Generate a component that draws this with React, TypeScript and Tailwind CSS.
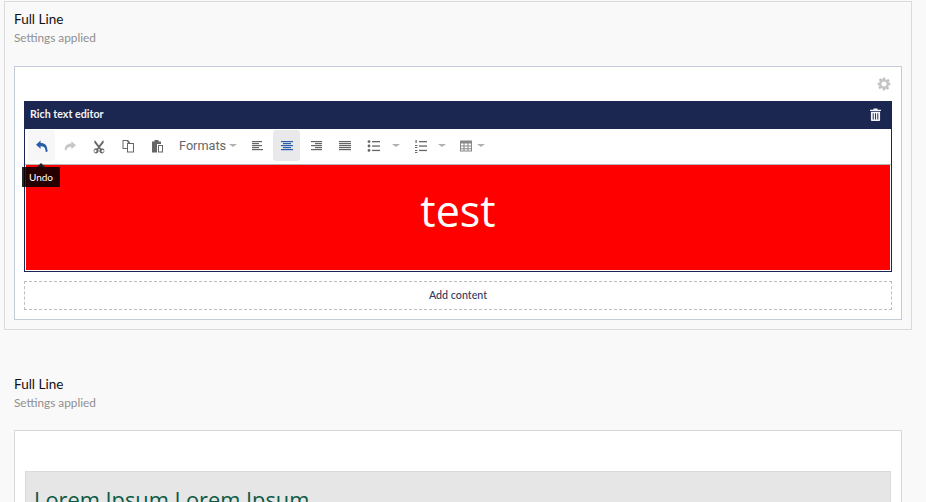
import type { ReactNode } from 'react';

function Svg({ children, className = 'w-4 h-4' }: { children: ReactNode; className?: string }) {
  return (
    <svg viewBox="0 0 16 16" className={className} fill="currentColor" aria-hidden="true">
      {children}
    </svg>
  );
}

const Caret = () => <span className="ml-[3px] w-0 h-0 border-x-[4px] border-x-transparent border-t-[3px] border-t-[#b0b0b0]" />;

function Lines({ rows }: { rows: [number, number][] }) {
  return (
    <Svg>
      {rows.map(([x, w], i) => (
        <rect key={i} x={x} y={3 + i * 2} width={w} height={1.2} />
      ))}
    </Svg>
  );
}

const UndoIcon = () => (
  <Svg>
    <path d="M6.6 2.6 2 6.8l4.6 4V8.3c2.6-.1 4.2.6 5 3.6.8.2 1.2.1 1.6 0 .2-4.400-2.400-6.800-6.600-6.800z" />
    <rect x="11.500" y="11" width="2" height="3" rx="1" />
  </Svg>
);

const RedoIcon = () => (
  <Svg>
    <path d="M9.400 3.200 14 7.200l-4.600 4V8.700c-2.600-.1-4.200.6-5 3.500-.8.300-1.200.1-1.600 0-.2-4.400 2.400-6.600 6.600-6.600z" />
  </Svg>
);

const CutIcon = () => (
  <Svg>
    <path d="M3.800 2 8 7.400 12.200 2l.6 2.600L9 9.200l1.100 1.300a2.500 2.500 0 1 1-1.300 1L8 10.400l-.8 1.100a2.500 2.500 0 1 1-1.300-1L7 9.200 3.200 4.600zM4.400 11.800a1.200 1.200 0 1 0 .01 0zM11.600 11.800a1.200 1.200 0 1 0 .01 0z" />
  </Svg>
);

const CopyIcon = () => (
  <Svg>
    <path fillRule="evenodd" d="M2.500 2H8l2.500 3H14v9.500H7v-3.500H2.500zm1 1v7H7V5h1.300L6.800 3zm4.500 3v7.500h5V6z" />
  </Svg>
);

const PasteIcon = () => (
  <Svg>
    <path fillRule="evenodd" d="M3 3.500h2.500v-1.500h4v1.500H12v2.500H8v8.500H3zm6 3.500h5v7.500H9zm1 1v5.500h3V8z" />
  </Svg>
);

const ListIcon = () => (
  <Svg>
    <circle cx="3" cy="3.600" r="1.400" />
    <circle cx="3" cy="8" r="1.400" />
    <circle cx="3" cy="12.400" r="1.400" />
    <rect x="6" y="3" width="8" height="1.300" />
    <rect x="6" y="7.400" width="8" height="1.300" />
    <rect x="6" y="11.800" width="8" height="1.300" />
  </Svg>
);

const NumListIcon = () => (
  <Svg>
    <rect x="2.500" y="2" width="1.200" height="3" />
    <rect x="2" y="7" width="2.400" height="1" />
    <rect x="2" y="9" width="2.400" height="1" />
    <rect x="2" y="12" width="2.400" height="1" />
    <rect x="2" y="14" width="2.400" height="1" />
    <rect x="6" y="3" width="8" height="1.300" />
    <rect x="6" y="7.400" width="8" height="1.300" />
    <rect x="6" y="11.800" width="8" height="1.300" />
  </Svg>
);

const TableIcon = () => (
  <Svg>
    <path fillRule="evenodd" d="M2 2.500h12v11H2zm1 3v2h2.500v-2zm3.500 0v2h3v-2zm4 0v2H13v-2zM3 8.500v1.800h2.500V8.500zm3.500 0v1.800h3V8.500zm4 0v1.800H13V8.500zM3 11.300v1.200h2.500v-1.200zm3.500 0v1.200h3v-1.200zm4 0v1.200H13v-1.200z" />
  </Svg>
);

const GearIcon = () => (
  <svg viewBox="0 0 24 24" className="w-[14px] h-[14px]" fill="#c4c4c4" aria-hidden="true">
    <path
      fillRule="evenodd"
      d="M10 1h4l.6 3.200 1.800.8 2.700-1.900 2.800 2.800-1.900 2.700.8 1.800L23 10v4l-3.200.6-.8 1.800 1.900 2.700-2.800 2.800-2.700-1.900-1.800.8L14 23h-4l-.6-3.200-1.800-.8-2.700 1.900-2.800-2.800 1.900-2.700-.8-1.800L1 14v-4l3.200-.6.8-1.800-1.900-2.700 2.800-2.800 2.700 1.900 1.800-.8zm2 6.500a4.500 4.500 0 1 0 .01 0z"
    />
  </svg>
);

const TrashIcon = () => (
  <svg viewBox="0 0 12 14" className="w-[11px] h-[13px]" fill="#f2f3f7" aria-hidden="true">
    <path
      fillRule="evenodd"
      d="M4 .5h4l.5 1.200H12v1.600H0V1.700h3.500zM1 4h10v9a1 1 0 0 1-1 1H2a1 1 0 0 1-1-1zm2 1.500v7h1v-7zm2.500 0v7h1v-7zm2.500 0v7h1v-7z"
    />
  </svg>
);

function ToolButton({ children, className = '' }: { children: ReactNode; className?: string }) {
  return <button className={`flex items-center justify-center h-[31px] rounded-[3px] ${className}`}>{children}</button>;
}

function SectionHead({ className = '' }: { className?: string }) {
  return (
    <div className={`h-[65px] pl-[9px] ${className}`}>
      <div className="text-[13.500px] leading-[18px] text-[#111]">Full Line</div>
      <div className="text-[11.800px] leading-[18px] mt-px text-[#8f8f8f]">Settings applied</div>
    </div>
  );
}

function Toolbar() {
  return (
    <div className="flex items-center h-[36px] bg-white border-b border-[#b5b5b5] pl-[3px] pb-[2px] text-[#666]">
      <ToolButton className="w-[27px] bg-[#f7f7f7] text-[#2a5ca8]"><UndoIcon /></ToolButton>
      <ToolButton className="w-[29px] text-[#c6c6c6]"><RedoIcon /></ToolButton>
      <ToolButton className="w-[29px]"><CutIcon /></ToolButton>
      <ToolButton className="w-[29px]"><CopyIcon /></ToolButton>
      <ToolButton className="w-[29px]"><PasteIcon /></ToolButton>
      <ToolButton className="w-[73px] !justify-start pl-[8px]">
        <span className="font-['Roboto',sans-serif] text-[12.700px] text-[#666]">Formats</span>
        <Caret />
      </ToolButton>
      <ToolButton className="w-[27px] pl-px"><Lines rows={[[2, 10], [2, 7], [2, 10], [2, 7], [2, 11]]} /></ToolButton>
      <ToolButton className="w-[27px] ml-[2px] bg-[#e9e9ec] text-[#2a5ca8]"><Lines rows={[[2, 12], [4, 8], [2, 12], [4, 8], [2, 12]]} /></ToolButton>
      <ToolButton className="w-[29px] ml-px"><Lines rows={[[3, 11], [7, 7], [3, 11], [7, 7], [3, 11]]} /></ToolButton>
      <ToolButton className="w-[29px]"><Lines rows={[[2, 12], [2, 12], [2, 12], [2, 12], [2, 12]]} /></ToolButton>
      <ToolButton className="w-[29px]"><ListIcon /></ToolButton>
      <ToolButton className="w-[12px]"><Caret /></ToolButton>
      <ToolButton className="w-[29px] ml-[6px]"><NumListIcon /></ToolButton>
      <ToolButton className="w-[10px]"><Caret /></ToolButton>
      <ToolButton className="w-[30px] ml-[13px] !justify-start text-[#888]"><TableIcon /><Caret /></ToolButton>
    </div>
  );
}

export default function App() {
  return (
    <div className="h-[502px] overflow-hidden bg-[#f9f9f9] pt-px pl-[4px] font-['Lato',sans-serif]">
      <section className="w-[908px] h-[329px] border border-[#dadada]">
        <SectionHead className="pt-[8px]" />
        <div className="w-[888px] h-[254px] ml-[9px] -mt-px bg-white border border-[#c3ccd8] px-[9px] pt-[34px]">
          <div className="relative h-[17px] -mt-[26px] mb-[9px] flex justify-end items-center pr-px">
            <GearIcon />
          </div>
          <div className="relative border border-[#1b2750] border-t-0">
            <div className="flex items-center justify-between h-[28px] -mx-px bg-[#1b2750] pl-[6px] pr-[11px] pb-px">
              <span className="text-[10.700px] font-bold text-[#f2f3f7]">Rich text editor</span>
              <TrashIcon />
            </div>
            <Toolbar />
            <div className="flex items-center justify-center h-[106px] bg-[#ff0000] border-b border-x border-white">
              <span className="font-['Open_Sans',sans-serif] text-[43px] leading-none text-white -mt-[14px]">test</span>
            </div>
            <div className="absolute left-[-3px] top-[62px] flex flex-col items-center w-[38px]">
              <span className="w-0 h-0 border-x-[4px] border-x-transparent border-b-[4px] border-b-[#1c1c1c]" />
              <span className="w-[38px] h-[20px] bg-black/85 text-white text-[10px] leading-[20px] text-center">Undo</span>
            </div>
          </div>
          <div className="flex items-center justify-center h-[29px] mt-[9px] border border-dashed border-[#bdbdbd] text-[10.700px] font-medium text-[#303a5e]">
            Add content
          </div>
        </div>
      </section>
      <section className="w-[908px] mt-[35px] border border-transparent">
        <SectionHead className="pt-[9px]" />
        <div className="w-[888px] h-[100px] ml-[9px] -mt-px bg-white border border-[#d8d8d8] px-[10px] pt-[40px]">
          <div className="h-[60px] bg-[#e6e6e6] border border-[#dadada] pl-[8px] pt-[12px] font-['Open_Sans',sans-serif] text-[21.800px] leading-[32px] text-[#0c5a44]">
            Lorem Ipsum Lorem Ipsum
          </div>
        </div>
      </section>
    </div>
  );
}
